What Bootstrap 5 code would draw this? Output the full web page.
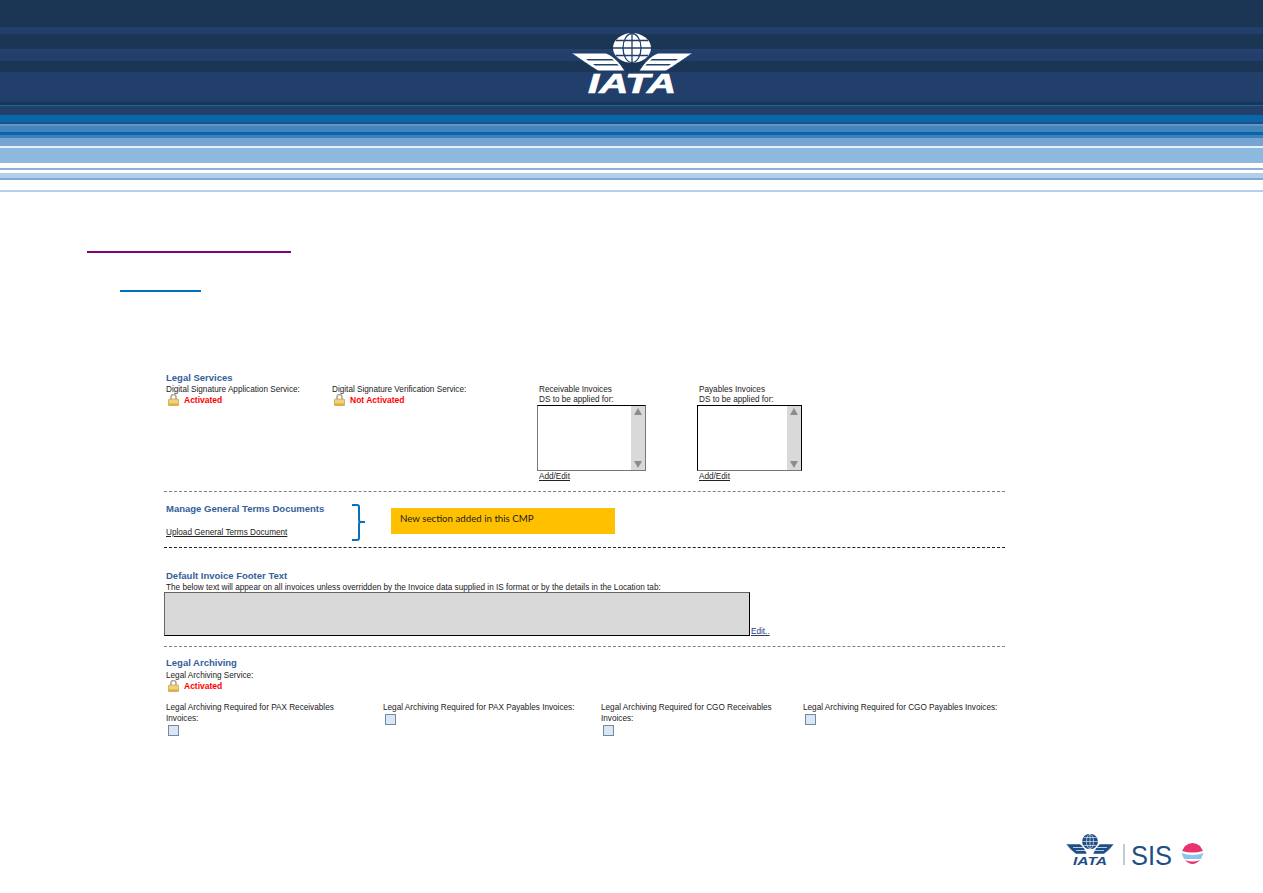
<!DOCTYPE html>
<html lang="en">
<head>
  <meta charset="UTF-8" />
  <meta name="viewport" content="width=device-width, initial-scale=1" />
  <title>Legal Services</title>
  <link href="https://cdn.jsdelivr.net/npm/bootstrap@5.3.3/dist/css/bootstrap.min.css" rel="stylesheet" />
  <style>
    body { background: #fff; overflow: hidden; font-family: "Liberation Sans", Arial, sans-serif; font-size: 8.2px; line-height: 11px; color: #222; }
    .band { height: 192px; padding-top: 28px; background: linear-gradient(to bottom,
      #1a3654 0 27px, #223f6c 27px 34px, #1b3555 34px 49px, #26416b 49px 52px, #223f6c 52px 61px, #1b3555 61px 72px,
      #223f6c 72px 102px, #1b3555 102px 105px, #0f6aa5 105px 106px, #233f6c 106px 115px, #0767aa 115px 122px,
      #1f4f86 122px 124px, #5f97c9 124px 126px, #4585bd 126px 132px, #0766a9 132px 135px, #3f7fba 135px 138px,
      #75a4d3 138px 146px, #e6f0f8 146px 148px, #8cb9dd 148px 163px, #fff 163px 168px, #8fb0d8 168px 170px,
      #fff 170px 173px, #b0cfe9 173px 178px, #82a8d8 178px 180px, #fff 180px 190px, #b5d0ea 190px 192px); }
    .rule-purple { height: 2px; width: 204px; margin: 59px 0 0 87px; background: #800080; }
    .rule-blue { height: 2px; width: 81px; margin: 37px 0 0 120px; background: #0070c0; }
    .sheet { width: 841px; margin: 81px 0 0 164px; }
    .sec-title { font-size: 9.5px; font-weight: 700; line-height: 10px; padding: 0 0 1px 2px; color: #34609a; }
    .plain { padding-left: 2px; }
    .status { color: #f00; font-size: 8.5px; font-weight: 700; padding-left: 5px; line-height: 11px; }
    .lock-row { margin-top: -1px; }
    .lock-icon { display: block; flex: none; }
    .dash { border-top: 1px dashed #808080; }
    .dash-dark { border-top: 1px dashed #222; }
    .col-sig-a { width: 166px; }
    .col-sig-b { width: 207px; }
    .col-list-a { width: 160px; }
    .col-list-b { width: 110px; }
    .list-label { line-height: 10px; padding: 1px 0 0 2px; }
    .list-box { height: 66px; border: 1px solid #777; border-top-color: #000; background: #fff; }
    .list-a { width: 109px; }
    .list-b { width: 105px; border-color: #000; border-bottom-color: #777; }
    .scroll-rail { width: 14px; background: #d9d9d9; padding: 2px 0; }
    .arrow-up { width: 0; height: 0; border: 4px solid transparent; border-top: 0; border-bottom: 7px solid #8c8c8c; }
    .arrow-down { width: 0; height: 0; border: 4px solid transparent; border-bottom: 0; border-top: 7px solid #8c8c8c; }
    a.doc-link { color: #222; }
    a.edit-link { color: #2b3a78; align-self: flex-end; padding-left: 1px; line-height: 11px; margin-bottom: -1px; }
    .manage-left { width: 188px; height: 34px; }
    .brace-wrap { width: 39px; flex: none; }
    .note-box { width: 224px; height: 26px; margin-top: 4px; padding-left: 9px; background: #ffc000; color: #1c1c1c; font-family: Lato, "Open Sans", sans-serif; font-size: 9.7px; line-height: 21px; }
    .terms-line { height: 10px; line-height: 11px; }
    .footer-grey { width: 586px; height: 44px; background: #d9d9d9; border: 1px solid #000; border-top-color: #666; border-left-color: #666; }
    .arch-a { width: 217px; padding-right: 30px; }
    .arch-b { width: 218px; padding-right: 10px; }
    .arch-c { width: 202px; padding-right: 18px; }
    .arch-d { width: 202px; }
    .tick { display: block; width: 11px; height: 11px; margin: 1px 0 0 4px; background: #dce6f2; border: 1px solid #6f8aa8; }
    .foot-mark { padding-right: 58px; margin-top: 98px; }
  </style>
</head>
<body>

  <header class="band d-flex justify-content-center">
    <svg width="124" height="72" viewBox="0 0 124 72" class="d-block">
      <ellipse cx="62" cy="20" rx="19" ry="15" fill="#fff"/>
      <g fill="none" stroke="#223f6c" stroke-width="1.3">
        <ellipse cx="62" cy="20" rx="9" ry="14.5"/>
        <path d="M62 5v30M43 20h38M46 12.5h32M46 27.5h32"/>
      </g>
      <path d="M1 25H36C44 28 50 35 55 43H28C20 38 10 31 1 25Z" fill="#fff" stroke="#223f6c"/>
      <path d="M16 31H42L44 32.5H18ZM23 36H47L49 37.5H25Z" fill="#223f6c"/>
      <path d="M123 25H88C80 28 74 35 69 43H96C104 38 114 31 123 25Z" fill="#fff" stroke="#223f6c"/>
      <path d="M108 31H82L80 32.5H106ZM101 36H77L75 37.5H99Z" fill="#223f6c"/>
      <text x="18" y="65" textLength="88" lengthAdjust="spacingAndGlyphs" font-family="Liberation Sans" font-weight="700" font-style="italic" font-size="28" fill="#fff" stroke="#fff" stroke-width=".7">IATA</text>
    </svg>
  </header>

  <div class="rule-purple"></div>
  <div class="rule-blue"></div>

  <main class="sheet">
    <div class="sec-title">Legal Services</div>
    <div class="d-flex">
      <div class="col-sig-a">
        <div class="plain">Digital Signature Application Service:</div>
        <div class="lock-row d-flex align-items-center ps-1">
          <svg class="lock-icon" width="11" height="12" viewBox="0 0 11 12"><path d="M3 6V3a2.5 2.5 0 0 1 5 0v3" fill="none" stroke="#a8a8a0" stroke-width="1.5"/><rect x="0.5" y="5" width="10" height="7" rx="1" fill="#f1d27c" stroke="#c79a35" stroke-width=".7"/><rect x="1" y="9.5" width="9" height="2" fill="#dcab42"/></svg>
          <span class="status">Activated</span>
        </div>
      </div>
      <div class="col-sig-b">
        <div class="plain">Digital Signature Verification Service:</div>
        <div class="lock-row d-flex align-items-center ps-1">
          <svg class="lock-icon" width="11" height="12" viewBox="0 0 11 12"><path d="M3 6V3a2.5 2.5 0 0 1 5 0v3" fill="none" stroke="#a8a8a0" stroke-width="1.5"/><rect x="0.5" y="5" width="10" height="7" rx="1" fill="#f1d27c" stroke="#c79a35" stroke-width=".7"/><rect x="1" y="9.5" width="9" height="2" fill="#dcab42"/></svg>
          <span class="status">Not Activated</span>
        </div>
      </div>
      <div class="col-list-a">
        <div class="list-label">Receivable Invoices<br>DS to be applied for:</div>
        <div class="list-box list-a d-flex justify-content-end">
          <div class="scroll-rail d-flex flex-column justify-content-between align-items-center"><i class="arrow-up"></i><i class="arrow-down"></i></div>
        </div>
        <a href="#" class="doc-link plain d-inline-block">Add/Edit</a>
      </div>
      <div class="col-list-b">
        <div class="list-label">Payables Invoices<br>DS to be applied for:</div>
        <div class="list-box list-b d-flex justify-content-end">
          <div class="scroll-rail d-flex flex-column justify-content-between align-items-center"><i class="arrow-up"></i><i class="arrow-down"></i></div>
        </div>
        <a href="#" class="doc-link plain d-inline-block">Add/Edit</a>
      </div>
    </div>

    <div class="dash" style="margin-top:9px"></div>

    <div class="d-flex" style="padding-top:12px">
      <div class="manage-left d-flex flex-column justify-content-between">
        <div class="sec-title">Manage General Terms Documents</div>
        <a href="#" class="doc-link plain">Upload General Terms Document</a>
      </div>
      <div class="brace-wrap">
        <svg width="13" height="37" viewBox="0 0 13 37" class="d-block"><path d="M0 1H5Q7 1 7 3V16Q7 18 9 18H13M9 18Q7 18 7 20V34Q7 36 5 36H0" fill="none" stroke="#0a70bd" stroke-width="2"/></svg>
      </div>
      <div class="note-box">New section added in this CMP</div>
    </div>

    <div class="dash-dark" style="margin-top:6px"></div>

    <div style="padding-top:23px">
      <div class="sec-title">Default Invoice Footer Text</div>
      <div class="plain terms-line">The below text will appear on all invoices unless overridden by the Invoice data supplied in IS format or by the details in the Location tab:</div>
      <div class="d-flex">
        <div class="footer-grey"></div>
        <a href="#" class="edit-link">Edit..</a>
      </div>
    </div>

    <div class="dash" style="margin-top:10px"></div>

    <div style="padding-top:11px">
      <div class="sec-title">Legal Archiving</div>
      <div class="plain" style="margin-top:1px">Legal Archiving Service:</div>
      <div class="lock-row d-flex align-items-center ps-1">
        <svg class="lock-icon" width="11" height="12" viewBox="0 0 11 12"><path d="M3 6V3a2.5 2.5 0 0 1 5 0v3" fill="none" stroke="#a8a8a0" stroke-width="1.5"/><rect x="0.5" y="5" width="10" height="7" rx="1" fill="#f1d27c" stroke="#c79a35" stroke-width=".7"/><rect x="1" y="9.5" width="9" height="2" fill="#dcab42"/></svg>
        <span class="status">Activated</span>
      </div>
      <div class="d-flex" style="margin-top:10px">
        <div class="arch-a"><div class="plain">Legal Archiving Required for PAX Receivables Invoices:</div><span class="tick"></span></div>
        <div class="arch-b"><div class="plain">Legal Archiving Required for PAX Payables Invoices:</div><span class="tick"></span></div>
        <div class="arch-c"><div class="plain">Legal Archiving Required for CGO Receivables Invoices:</div><span class="tick"></span></div>
        <div class="arch-d"><div class="plain">Legal Archiving Required for CGO Payables Invoices:</div><span class="tick"></span></div>
      </div>
    </div>
  </main>

  <footer class="foot-mark d-flex justify-content-end">
    <svg width="140" height="40" viewBox="0 0 140 40" class="d-block">
      <ellipse cx="25" cy="7.5" rx="8" ry="7.7" fill="#1f4e87"/>
      <g fill="none" stroke="#fff" stroke-width=".6"><ellipse cx="25" cy="7.5" rx="3.5" ry="7.3"/><path d="M25 0v15M17 7.5h16M18.5 3.5h13M18.5 11.5h13"/></g>
      <path d="M1 10H15C18 12 20 15 22 20H11C7 17 4 14 1 10ZM49 10H35C32 12 30 15 28 20H39C43 17 46 14 49 10Z" fill="#1f4e87" stroke="#fff" stroke-width=".5"/>
      <path d="M8 13.5H19M11 16.5H20.5M42 13.5H31M39 16.5H29.5" stroke="#fff" stroke-width=".7"/>
      <text x="8" y="31" textLength="34" lengthAdjust="spacingAndGlyphs" font-family="Liberation Sans" font-weight="700" font-style="italic" font-size="11" fill="#1f4e87">IATA</text>
      <rect x="58.5" y="10" width="1" height="21" fill="#7f97b5"/>
      <text x="66" y="31" textLength="41" lengthAdjust="spacingAndGlyphs" font-family="Liberation Sans" font-size="28" fill="#1c4f82">SIS</text>
      <path d="M120 12Q127.5 6 135 12L138 17Q127.5 20 117 17Z" fill="#e8336e"/>
      <path d="M116.5 19Q127.5 23 138.5 19L136 25H119Z" fill="#8cc4ec"/>
      <path d="M120 26Q127.5 29 135 26Q127.5 34 120 26Z" fill="#e8336e"/>
    </svg>
  </footer>

</body>
</html>
